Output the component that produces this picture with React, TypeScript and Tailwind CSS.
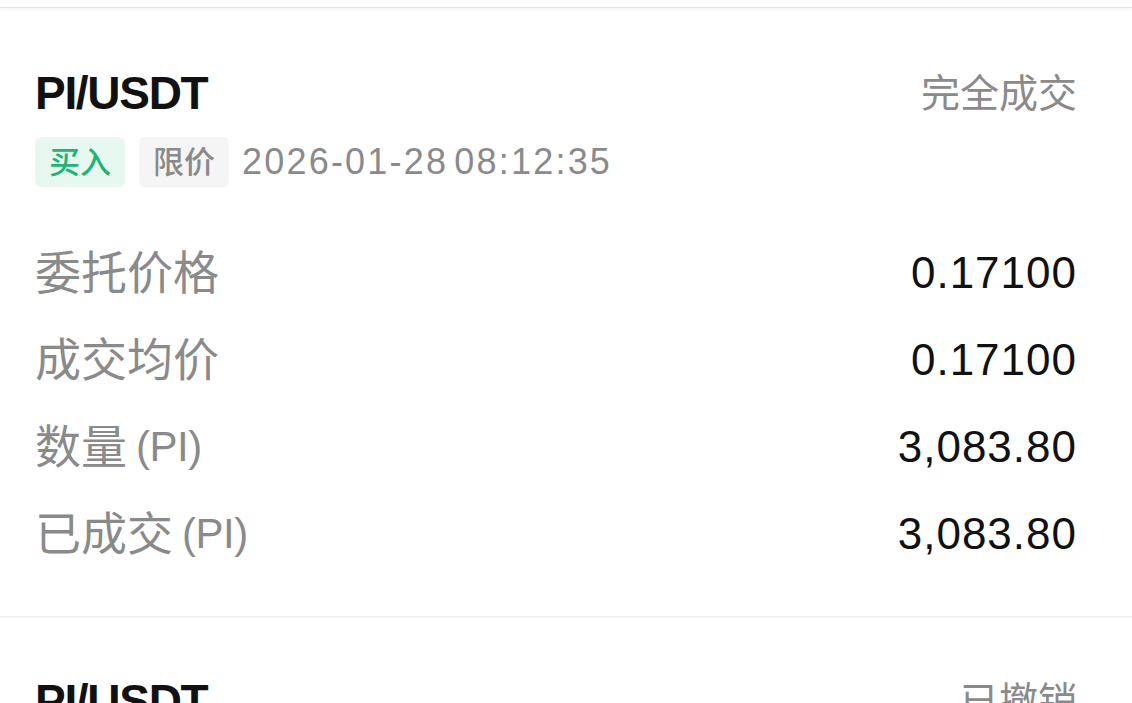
import React from "react";

const latin = { fontFamily: '"Liberation Sans", "Noto Sans CJK SC", sans-serif' };

function Row({ label, unit, value }: { label: string; unit?: string; value: string }) {
  return (
    <div className="flex h-[87px] items-center justify-between">
      <span className="flex items-center leading-none text-[#8a8a8a]">
        <span className="text-[46px]">{label}</span>
        {unit ? <span className="ml-[9px] text-[42px] tracking-[-0.5px]">{unit}</span> : null}
      </span>
      <span className="text-[44px] leading-none tracking-[1px] text-[#111111]">{value}</span>
    </div>
  );
}

export default function App() {
  return (
    <div className="h-[703px] w-[1132px] overflow-hidden bg-white" style={latin}>
      <div className="h-[8px] border-b border-[#e6e6e6] bg-white shadow-[0_2px_3px_rgba(0,0,0,0.04)]" />
      <div className="pl-[35px] pr-[55px] pt-[60px] pb-[39px]">
        <div className="flex h-[50px] items-center justify-between">
          <span className="text-[46px] font-bold leading-none tracking-[-1.3px] text-[#111111]">PI/USDT</span>
          <span className="text-[39px] leading-none text-[#8a8a8a]">完全成交</span>
        </div>
        <div className="mt-[19px] flex h-[50px] items-center">
          <span className="flex h-[50px] items-center rounded-[6px] bg-[#e7f8f0] px-[14px] text-[31px] font-medium leading-none text-[#1db475]">买入</span>
          <span className="ml-[14px] flex h-[50px] items-center rounded-[6px] bg-[#f5f5f5] px-[14px] text-[31px] font-medium leading-none text-[#8a8a8a]">限价</span>
          <span className="ml-[13px] text-[36px] leading-none tracking-[2.2px] text-[#8a8a8a] [word-spacing:-6px]">2026-01-28 08:12:35</span>
        </div>
        <div className="mt-[42px] flex flex-col">
          <Row label="委托价格" value="0.17100" />
          <Row label="成交均价" value="0.17100" />
          <Row label="数量" unit="(PI)" value="3,083.80" />
          <Row label="已成交" unit="(PI)" value="3,083.80" />
        </div>
      </div>
      <div className="h-[2px] bg-[#f2f2f2]" />
      <div className="pl-[35px] pr-[55px] pt-[58px]">
        <div className="flex h-[50px] items-center justify-between">
          <span className="text-[46px] font-bold leading-none tracking-[-1.3px] text-[#111111]">PI/USDT</span>
          <span className="text-[39px] leading-none text-[#8a8a8a]">已撤销</span>
        </div>
      </div>
    </div>
  );
}
